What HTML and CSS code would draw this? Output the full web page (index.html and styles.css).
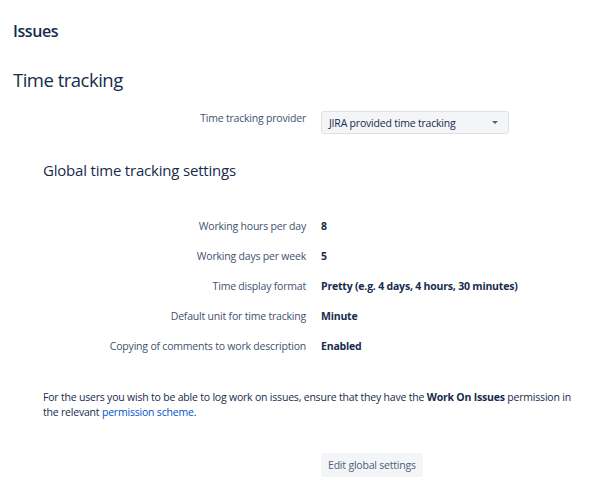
FILE: index.html
```html
<!DOCTYPE html>
<html>
<head>
<meta charset="utf-8">
<link rel="stylesheet" href="styles.css">
</head>
<body>
<div class="page">
  <h2 class="h-issues">Issues</h2>
  <h2 class="h-time">Time tracking</h2>
  <div class="row provider">
    <div class="label">Time tracking provider</div>
    <div class="value">
      <div class="select"><span>JIRA provided time tracking</span><span class="caret"></span></div>
    </div>
  </div>
  <h3 class="h-global">Global time tracking settings</h3>
  <div class="settings">
    <div class="row"><div class="label">Working hours per day</div><div class="value bold">8</div></div>
    <div class="row"><div class="label">Working days per week</div><div class="value bold">5</div></div>
    <div class="row"><div class="label">Time display format</div><div class="value bold">Pretty (e.g. 4 days, 4 hours, 30 minutes)</div></div>
    <div class="row"><div class="label">Default unit for time tracking</div><div class="value bold">Minute</div></div>
    <div class="row"><div class="label">Copying of comments to work description</div><div class="value bold">Enabled</div></div>
  </div>
  <p class="note">For the users you wish to be able to log work on issues, ensure that they have the <b>Work On Issues</b> permission in the relevant <a href="#">permission scheme</a>.</p>
  <div class="row actions">
    <div class="label"></div>
    <div class="value"><button class="btn">Edit global settings</button></div>
  </div>
</div>
</body>
</html>
```
FILE: styles.css
```css
* { box-sizing: border-box; }
html, body { margin: 0; padding: 0; background: #fff; }
body {
  font-family: "Open Sans", "Noto Sans", sans-serif;
  color: #172b4d;
  font-size: 10.5px;
}
.page { padding: 19px 13px 0 13px; }
h2, h3, p { margin: 0; font-weight: 500; }
.h-issues { font-size: 16px; line-height: 24px; font-weight: 600; letter-spacing: -0.4px; }
.h-time { font-size: 18.5px; line-height: 26px; margin-top: 24px; letter-spacing: -0.5px; }
.row { display: flex; align-items: center; }
.label {
  width: 293px;
  text-align: right;
  color: #42526e;
  letter-spacing: -0.2px;
}
.value { padding-left: 15px; color: #172b4d; letter-spacing: -0.2px; }
.bold { font-weight: 700; }
.provider { margin-top: 18px; align-items: flex-start; }
.provider .label { padding-top: 0; }
.select {
  width: 188px;
  height: 23px;
  border: 1px solid #dfe1e6;
  background: #f4f5f7;
  border-radius: 3px;
  display: flex;
  align-items: center;
  justify-content: space-between;
  padding: 0 10px 0 7px;
  color: #172b4d;
}
.caret {
  width: 0; height: 0;
  border-left: 3px solid transparent;
  border-right: 3px solid transparent;
  border-top: 3px solid #505f79;
}
.h-global { font-size: 15px; line-height: 22px; margin: 25px 0 0 30px; letter-spacing: -0.2px; }
.settings { margin-top: 37px; display: flex; flex-direction: column; gap: 14px; }
.settings .row { height: 16px; }
.note {
  margin: 36px 0 0 30px;
  max-width: 535px;
  line-height: 15px;
  color: #172b4d;
  letter-spacing: -0.2px;
  font-weight: 400;
}
.note a { color: #0052cc; text-decoration: none; }
.actions { margin-top: 33px; }
.btn {
  font-family: inherit;
  font-size: 10.5px;
  letter-spacing: -0.2px;
  background: #f4f5f7;
  color: #505f79;
  border: none;
  border-radius: 3px;
  height: 24px;
  padding: 0 7px;
}
```
